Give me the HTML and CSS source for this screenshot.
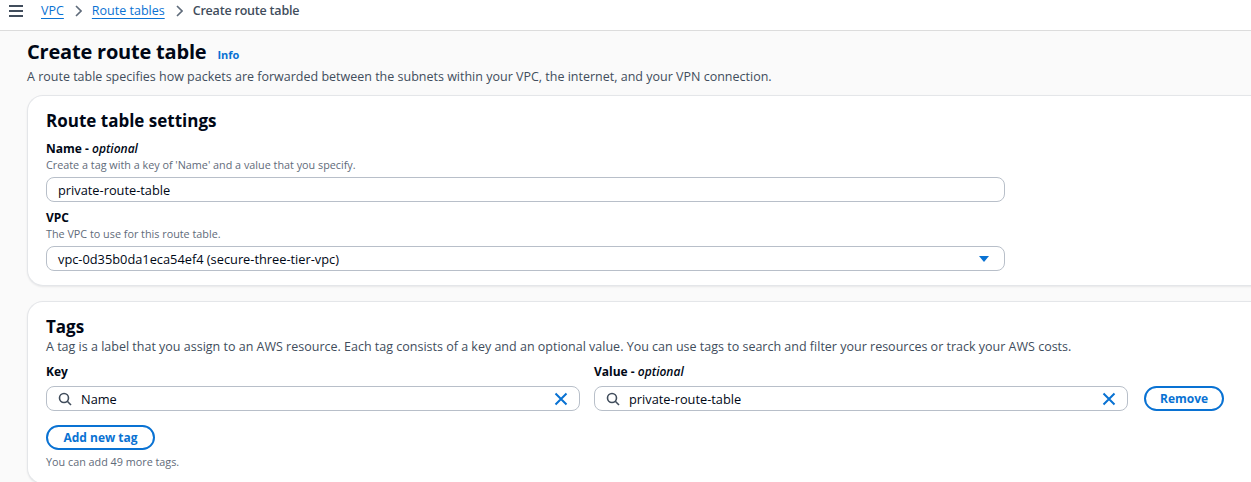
FILE: index.html
```html
<!DOCTYPE html>
<html>
<head>
<meta charset="utf-8">
<link rel="stylesheet" href="styles.css">
</head>
<body>
<header class="crumbs">
  <svg class="menu" width="14" height="12" viewBox="0 0 14 12"><path d="M0 1h14M0 6h14M0 11h14" stroke="#414d5c" stroke-width="2"/></svg>
  <a class="crumb-link">VPC</a>
  <svg class="chev" width="8" height="12" viewBox="0 0 8 12"><path d="M2 1l5 5-5 5" fill="none" stroke="#5f6b7a" stroke-width="1.6"/></svg>
  <a class="crumb-link">Route tables</a>
  <svg class="chev" width="8" height="12" viewBox="0 0 8 12"><path d="M2 1l5 5-5 5" fill="none" stroke="#5f6b7a" stroke-width="1.6"/></svg>
  <span class="crumb-current">Create route table</span>
</header>
<main class="main">
  <div class="page-head">
    <h1 class="title">Create route table <span class="info">Info</span></h1>
    <p class="page-desc">A route table specifies how packets are forwarded between the subnets within your VPC, the internet, and your VPN connection.</p>
  </div>
  <section class="card card-settings">
    <h2 class="card-title">Route table settings</h2>
    <div class="field">
      <div class="label">Name - <i>optional</i></div>
      <div class="hint">Create a tag with a key of 'Name' and a value that you specify.</div>
      <div class="input wide">private-route-table</div>
    </div>
    <div class="field second">
      <div class="label">VPC</div>
      <div class="hint">The VPC to use for this route table.</div>
      <div class="input wide select">
        <span>vpc-0d35b0da1eca54ef4 (secure-three-tier-vpc)</span>
        <svg width="12" height="8" viewBox="0 0 12 8"><path d="M1 1h10L6 7z" fill="#0972d3"/></svg>
      </div>
    </div>
  </section>
  <section class="card card-tags">
    <h2 class="card-title">Tags</h2>
    <p class="card-desc">A tag is a label that you assign to an AWS resource. Each tag consists of a key and an optional value. You can use tags to search and filter your resources or track your AWS costs.</p>
    <div class="tag-row">
      <div class="tag-col">
        <div class="label">Key</div>
        <div class="input search">
          <svg class="q" width="14" height="14" viewBox="0 0 14 14"><circle cx="6" cy="6" r="4.5" fill="none" stroke="#414d5c" stroke-width="1.6"/><path d="M9.3 9.3L13 13" stroke="#414d5c" stroke-width="1.6"/></svg>
          <span class="val">Name</span>
          <svg class="x" width="14" height="14" viewBox="0 0 14 14"><path d="M1.5 1.5l11 11M12.5 1.5l-11 11" stroke="#0972d3" stroke-width="2"/></svg>
        </div>
      </div>
      <div class="tag-col">
        <div class="label">Value - <i>optional</i></div>
        <div class="input search">
          <svg class="q" width="14" height="14" viewBox="0 0 14 14"><circle cx="6" cy="6" r="4.5" fill="none" stroke="#414d5c" stroke-width="1.6"/><path d="M9.3 9.3L13 13" stroke="#414d5c" stroke-width="1.6"/></svg>
          <span class="val">private-route-table</span>
          <svg class="x" width="14" height="14" viewBox="0 0 14 14"><path d="M1.5 1.5l11 11M12.5 1.5l-11 11" stroke="#0972d3" stroke-width="2"/></svg>
        </div>
      </div>
      <button class="btn remove">Remove</button>
    </div>
    <button class="btn add">Add new tag</button>
    <div class="hint small">You can add 49 more tags.</div>
  </section>
</main>
</body>
</html>
```
FILE: styles.css
```css
* { box-sizing: border-box; }
html, body { margin: 0; padding: 0; }
body {
  width: 1251px;
  height: 482px;
  overflow: hidden;
  background: #fafafa;
  font-family: "Open Sans", "Noto Sans", sans-serif;
  color: #000716;
}
.crumbs {
  height: 31px;
  background: #fff;
  border-bottom: 1px solid #dcdcdc;
  display: flex;
  align-items: center;
  padding: 0 0 8px 9px;
  font-size: 12.5px;
  line-height: 18px;
}
.menu { margin-right: 18px; }
.crumb-link {
  color: #0972d3;
  text-decoration: underline;
  text-underline-offset: 3px;
}
.chev { margin: 0 10px; }
.crumb-current { color: #414d5c; font-weight: 600; letter-spacing: -0.2px; }
.main {
  padding: 7px 0 0 27px;
  margin-right: -30px;
}
.page-head { margin-bottom: 10px; }
.title {
  margin: 0;
  font-size: 20px;
  font-weight: 700;
  line-height: 28px;
  letter-spacing: -0.2px;
}
.info {
  font-size: 11px;
  font-weight: 700;
  color: #0972d3;
  margin-left: 6px;
  letter-spacing: 0;
}
.page-desc {
  margin: 0;
  font-size: 12.5px;
  line-height: 16px;
  color: #414d5c;
}
.card {
  background: #fff;
  border: 1px solid #e4e6e9;
  border-right: none;
  border-radius: 16px 0 0 16px;
  box-shadow: 0 1px 2px rgba(0, 7, 22, 0.08);
  padding: 14px 0 14px 18px;
}
.card-settings { margin-bottom: 15px; }
.card-title {
  margin: 0;
  font-size: 17px;
  font-weight: 700;
  line-height: 22px;
}
.field { margin-top: 9px; }
.field.second { margin-top: 8px; }
.label { font-size: 12px; font-weight: 700; line-height: 16px; }
.label i { font-weight: 600; }
.hint { font-size: 10.8px; color: #5f6b7a; line-height: 15px; }
.input {
  height: 25px;
  border: 1px solid #b8bfc9;
  border-radius: 8px;
  background: #fff;
  display: flex;
  align-items: center;
  padding: 0 11px;
  font-size: 12.8px;
  margin-top: 5px;
}
.wide { width: 959px; }
.select { justify-content: space-between; padding-right: 14px; }
.card-desc { margin: 1px 0 0; font-size: 12.5px; line-height: 16px; color: #414d5c; }
.tag-row {
  display: flex;
  align-items: flex-end;
  margin-top: 9px;
}
.tag-col { width: 534px; margin-right: 14px; }
.tag-col + .tag-col { margin-right: 16px; }
.tag-col .input { margin-top: 6px; }
.search { padding: 0 11px 0 11px; }
.search .q { margin-right: 9px; }
.search .val { flex: 1; }
.btn {
  font-family: inherit;
  font-size: 12px;
  font-weight: 700;
  color: #0972d3;
  background: #fff;
  border: 2px solid #0972d3;
  border-radius: 14px;
  height: 25px;
  padding: 0 14px;
  cursor: pointer;
}
.remove { width: 80px; }
.add { margin-top: 14px; width: 109px; display: block; }
.small { margin-top: 4px; }
```
